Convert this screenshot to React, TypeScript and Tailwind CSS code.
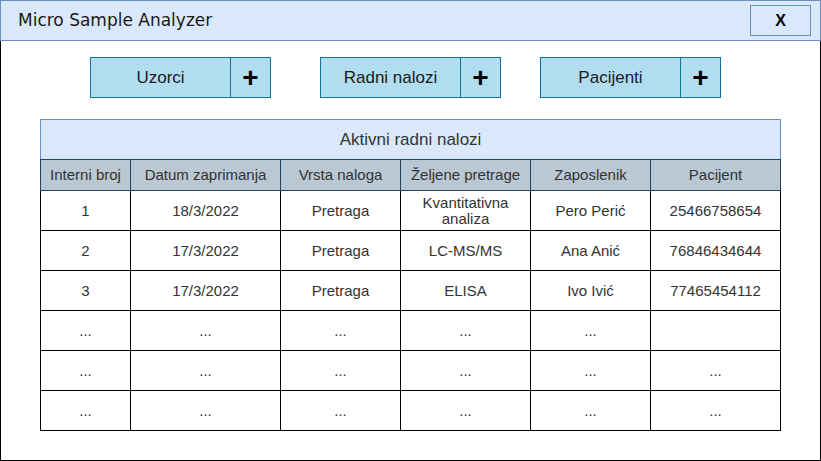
const columns = [
  { label: "Interni broj", w: "w-[90px]" },
  { label: "Datum zaprimanja", w: "w-[150px]" },
  { label: "Vrsta naloga", w: "w-[120px]" },
  { label: "Željene pretrage", w: "w-[130px]" },
  { label: "Zaposlenik", w: "w-[120px]" },
  { label: "Pacijent", w: "w-[130px]" },
];

const rows: string[][] = [
  ["1", "18/3/2022", "Pretraga", "Kvantitativna analiza", "Pero Perić", "25466758654"],
  ["2", "17/3/2022", "Pretraga", "LC-MS/MS", "Ana Anić", "76846434644"],
  ["3", "17/3/2022", "Pretraga", "ELISA", "Ivo Ivić", "77465454112"],
  ["...", "...", "...", "...", "...", ""],
  ["...", "...", "...", "...", "...", "..."],
  ["...", "...", "...", "...", "...", "..."],
];

function ActionButton({ label, className }: { label: string; className?: string }) {
  return (
    <div className={"flex h-[41px] " + (className ?? "")}>
      <div className="w-[141px] h-full flex items-center justify-center bg-[#b1ddf0] border border-[#10739e] text-[17px] text-[#1a1a1a]">
        {label}
      </div>
      <div className="w-[41px] -ml-px h-full flex items-center justify-center bg-[#b1ddf0] border border-[#10739e] text-[28px] font-bold leading-none text-black">
        +
      </div>
    </div>
  );
}

export default function App() {
  return (
    <div className="w-[821px] h-[461px] flex flex-col bg-white font-['Liberation_Sans',Arial,sans-serif]">
      {/* Title bar */}
      <div className="h-[41px] shrink-0 flex items-center justify-between bg-[#dae8fc] border border-[#6c8ebf] pl-[17px] pr-[9px]">
        <span className="font-['DejaVu_Sans',Verdana,sans-serif] text-[17px] text-[#1a1a1a]">
          Micro Sample Analyzer
        </span>
        <div className="w-[61px] h-[31px] flex items-center justify-center border border-[#6c8ebf] bg-[#dae8fc] text-[16px] font-bold">
          X
        </div>
      </div>

      <div className="flex-1 border-x border-b border-black">
        {/* Buttons */}
        <div className="flex mt-[16px] ml-[89px]">
          <ActionButton label="Uzorci" />
          <ActionButton label="Radni nalozi" className="ml-[49px]" />
          <ActionButton label="Pacijenti" className="ml-[39px]" />
        </div>

        {/* Table */}
        <div className="ml-[39px] mt-[21px] w-[741px]">
          <div className="h-[41px] flex items-center justify-center bg-[#dae8fc] border border-[#6c8ebf] text-[17px] text-[#333]">
            Aktivni radni nalozi
          </div>
          <table className="table-fixed border-collapse w-[741px] -mt-px text-[15px] text-[#333]">
            <thead>
              <tr className="h-[31px] bg-[#bac8d3]">
                {columns.map((c) => (
                  <th key={c.label} className={"border border-[#23445d] font-normal p-0 " + c.w}>
                    {c.label}
                  </th>
                ))}
              </tr>
            </thead>
            <tbody>
              {rows.map((r, i) => (
                <tr key={i} className="h-[40px]">
                  {r.map((cell, j) => (
                    <td key={j} className="border border-black text-center p-0 leading-[16px] px-4">
                      {cell}
                    </td>
                  ))}
                </tr>
              ))}
            </tbody>
          </table>
        </div>
      </div>
    </div>
  );
}
